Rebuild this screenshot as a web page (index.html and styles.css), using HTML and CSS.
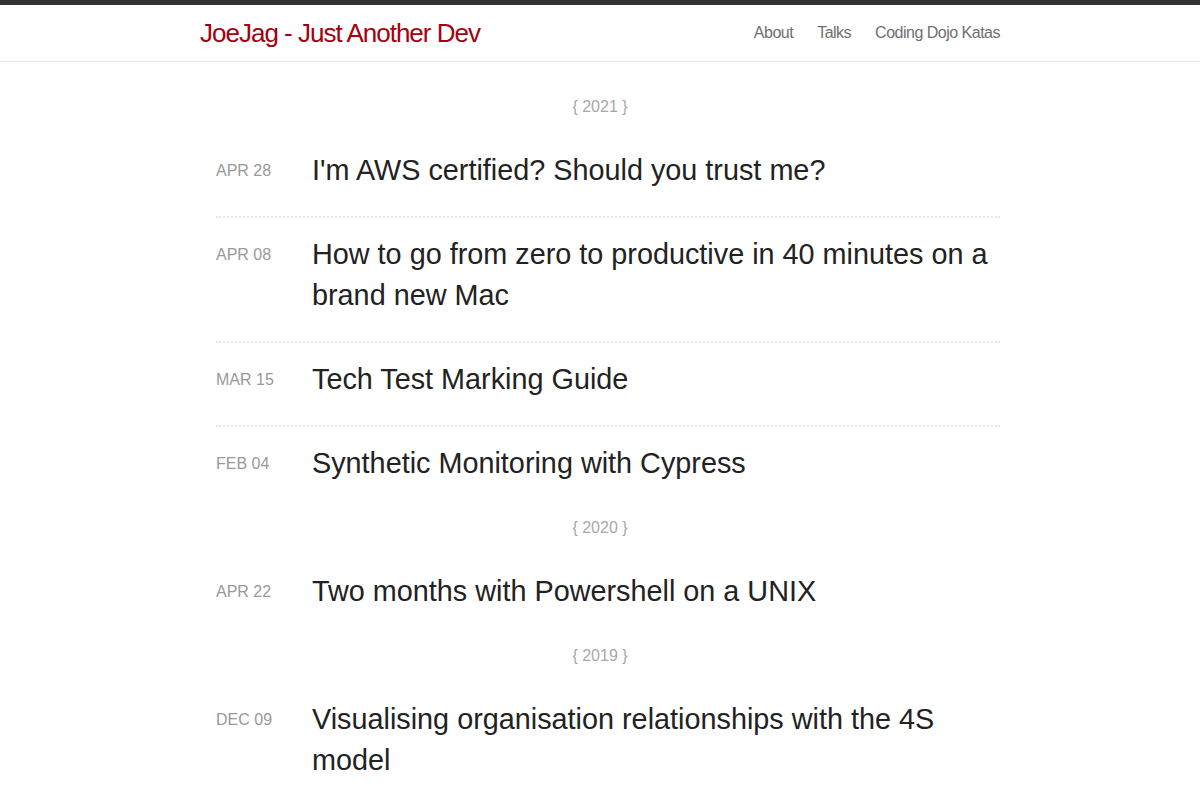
FILE: index.html
```html
<!DOCTYPE html>
<html lang="en">
<head>
    <meta charset="UTF-8">
    <meta name="viewport" content="width=device-width, initial-scale=1.0">
    <title>JoeJag - Just Another Dev</title>
    <link rel="stylesheet" href="styles.css">
</head>
<body>
    <header class="site-header">
        <div class="wrapper">
            <a class="site-title" href="#">JoeJag - Just Another Dev</a>
            <nav class="site-nav">
                <a href="#">About</a>
                <a href="#">Talks</a>
                <a href="#">Coding Dojo Katas</a>
            </nav>
        </div>
    </header>

    <main class="wrapper posts">
        <h2 class="year">{ 2021 }</h2>
        <ul class="post-list">
            <li class="post">
                <span class="post-date">Apr 28</span>
                <a class="post-title" href="#">I'm AWS certified? Should you trust me?</a>
            </li>
            <li class="post">
                <span class="post-date">Apr 08</span>
                <a class="post-title" href="#">How to go from zero to productive in 40 minutes on a brand new Mac</a>
            </li>
            <li class="post">
                <span class="post-date">Mar 15</span>
                <a class="post-title" href="#">Tech Test Marking Guide</a>
            </li>
            <li class="post">
                <span class="post-date">Feb 04</span>
                <a class="post-title" href="#">Synthetic Monitoring with Cypress</a>
            </li>
        </ul>

        <h2 class="year">{ 2020 }</h2>
        <ul class="post-list">
            <li class="post">
                <span class="post-date">Apr 22</span>
                <a class="post-title" href="#">Two months with Powershell on a UNIX</a>
            </li>
        </ul>

        <h2 class="year">{ 2019 }</h2>
        <ul class="post-list">
            <li class="post">
                <span class="post-date">Dec 09</span>
                <a class="post-title" href="#">Visualising organisation relationships with the 4S model</a>
            </li>
        </ul>
    </main>
</body>
</html>
```

FILE: styles.css
```css
body {
    margin: 0;
    border-top: 5px solid #333;
    font-family: "Liberation Sans", Arial, sans-serif;
    color: #222;
    background: #fff;
}

a {
    text-decoration: none;
}

.wrapper {
    width: 800px;
    margin: 0 auto;
}

.site-header {
    height: 56px;
    border-bottom: 1px solid #e8e8e8;
}

.site-header .wrapper {
    display: flex;
    justify-content: space-between;
    align-items: center;
    height: 100%;
}

.site-title {
    font-size: 26px;
    letter-spacing: -1px;
    color: #a5000e;
    margin-top: 1px;
}

.site-nav {
    display: flex;
    gap: 24px;
}

.site-nav a {
    font-size: 16px;
    letter-spacing: -0.5px;
    color: #6f6f6f;
}

.posts {
    padding-top: 26px;
}

.year {
    margin: 8px 0 16px;
    font-size: 16px;
    font-weight: normal;
    line-height: 22px;
    text-align: center;
    color: #a8a8a8;
}

.post-list {
    list-style: none;
    margin: 0;
    padding: 0 0 0 16px;
}

.post {
    display: flex;
    align-items: flex-start;
    padding: 16px 0 25px;
    border-bottom: 2px dotted #ebe4e5;
}

.post:last-child {
    border-bottom: none;
}

.post-date {
    flex: 0 0 96px;
    font-size: 16px;
    line-height: 41px;
    text-transform: uppercase;
    color: #999;
}

.post-title {
    flex: 1;
    font-size: 28.8px;
    line-height: 41px;
    color: #222;
}
```
